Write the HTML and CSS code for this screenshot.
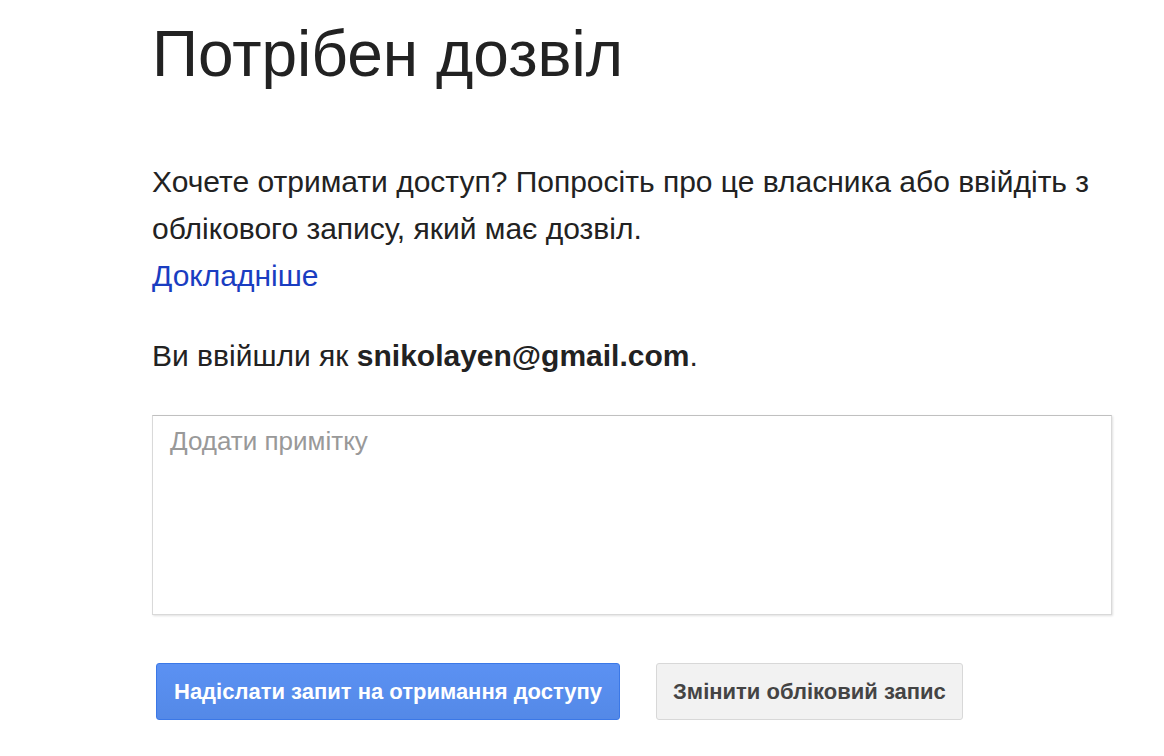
FILE: index.html
```html
<!DOCTYPE html>
<html lang="uk">
<head>
<meta charset="utf-8">
<link rel="stylesheet" href="styles.css">
</head>
<body>
<main class="page">
  <h1 class="title">Потрібен дозвіл</h1>
  <p class="lead">Хочете отримати доступ? Попросіть про це власника або ввійдіть з облікового запису, який має дозвіл.<br><a class="more" href="#">Докладніше</a></p>
  <p class="who">Ви ввійшли як <b>snikolayen@gmail.com</b>.</p>
  <textarea class="note" placeholder="Додати примітку"></textarea>
  <div class="actions">
    <button class="btn btn-primary">Надіслати запит на отримання доступу</button>
    <button class="btn btn-secondary">Змінити обліковий запис</button>
  </div>
</main>
</body>
</html>
```
FILE: styles.css
```css
html, body { margin: 0; padding: 0; background: #fff; }
body { font-family: "Liberation Sans", Arial, sans-serif; color: #222; }
.page { padding: 14px 0 0 152px; width: 960px; }
.title { font-size: 64px; font-weight: normal; margin: 0; line-height: 80px; color: #222; }
.lead { font-size: 30px; line-height: 47px; margin: 64px 0 0; }
.more { color: #1a3dc1; text-decoration: none; }
.who { font-size: 30px; line-height: 47px; margin: 33px 0 0; }
.who b { font-weight: bold; }
.note {
  display: block; box-sizing: border-box; width: 960px; height: 200px;
  margin-top: 36px; padding: 10px 17px;
  border: 1px solid #d9d9d9; border-top-color: #c0c0c0;
  box-shadow: 1px 1px 2px rgba(0,0,0,0.12);
  font-family: "Liberation Sans", Arial, sans-serif; font-size: 26px; color: #222;
  resize: none; outline: none;
}
.note::placeholder { color: #999; }
.actions { display: flex; gap: 36px; margin: 48px 0 0 4px; }
.btn {
  height: 57px; border-radius: 3px; font-family: "Liberation Sans", Arial, sans-serif;
  font-size: 22px; font-weight: bold; padding: 0 17px; cursor: pointer;
}
.btn-primary {
  background: linear-gradient(#5b91f3, #5489e7); border: 1px solid #3b78e7; color: #fff;
}
.btn-secondary {
  background: #f2f2f2; border: 1px solid #d8d8d8; color: #444; padding: 0 16px;
}
```
